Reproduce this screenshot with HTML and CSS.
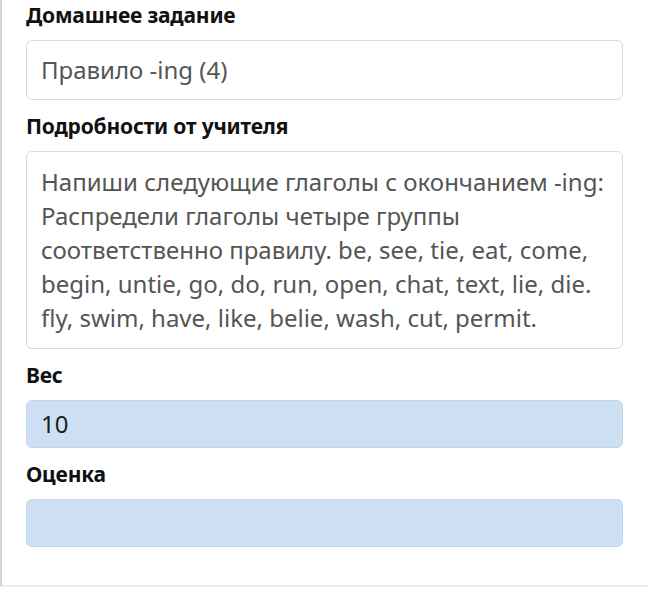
FILE: index.html
```html
<!DOCTYPE html>
<html lang="ru">
<head>
    <meta charset="UTF-8">
    <meta name="viewport" content="width=device-width, initial-scale=1.0">
    <title>Домашнее задание</title>
    <link rel="stylesheet" href="styles.css">
</head>
<body>
    <div class="panel">
        <!-- Homework title -->
        <div class="field">
            <div class="label">Домашнее задание</div>
            <div class="box">Правило -ing (4)</div>
        </div>

        <!-- Teacher details -->
        <div class="field">
            <div class="label">Подробности от учителя</div>
            <div class="box box-text">Напиши следующие глаголы с окончанием -ing: Распредели глаголы четыре группы соответственно правилу. be, see, tie, eat, come, begin, untie, go, do, run, open, chat, text, lie, die. fly, swim, have, like, belie, wash, cut, permit.</div>
        </div>

        <!-- Weight -->
        <div class="field">
            <div class="label">Вес</div>
            <div class="box box-blue">10</div>
        </div>

        <!-- Mark -->
        <div class="field">
            <div class="label">Оценка</div>
            <div class="box box-blue box-empty"></div>
        </div>
    </div>
</body>
</html>
```

FILE: styles.css
```css
* {
    margin: 0;
    padding: 0;
    box-sizing: border-box;
}

body, html {
    background-color: #ffffff;
    font-family: "Noto Sans", "Open Sans", sans-serif;
}

.panel {
    border-left: 2px solid #d4d4d4;
    border-bottom: 2px solid #ececec;
    padding: 2px 25px 38px 24px;
}

.field {
    margin-bottom: 13px;
}

.field:last-child {
    margin-bottom: 0;
}

.label {
    font-size: 21px;
    font-weight: 700;
    line-height: 26px;
    color: #111111;
    letter-spacing: -0.2px;
    margin-bottom: 12px;
}

.box {
    border: 1px solid #dadada;
    border-radius: 6px;
    padding: 13px 8px 13px 14px;
    font-size: 24px;
    line-height: 32px;
    color: #555555;
}

.box-text {
    padding: 13px 8px 13px 14px;
    line-height: 34px;
}

.box-blue {
    background-color: #cde0f3;
    border-color: #c3d5e8;
    color: #1c1c1c;
    padding: 7px 14px;
}

.box-empty {
    height: 48px;
}
```
